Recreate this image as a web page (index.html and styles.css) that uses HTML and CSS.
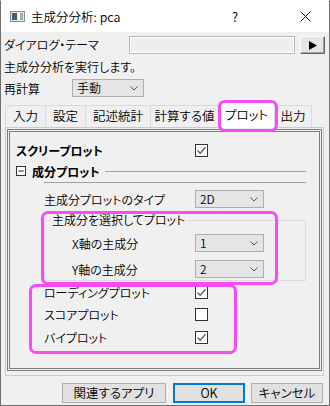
FILE: index.html
```html
<!DOCTYPE html>
<html lang="ja">
<head>
    <meta charset="UTF-8">
    <title>主成分分析: pca</title>
    <link rel="stylesheet" href="styles.css">
</head>
<body>
<div class="window">
    <div class="titlebar">
        <svg class="app-icon" width="15" height="11" viewBox="0 0 15 11">
            <rect x="0.5" y="0.5" width="14" height="10" fill="#e4e4e4" stroke="#8c8c8c"/>
            <rect x="2" y="2" width="5" height="7" fill="#3f5d7c"/>
            <rect x="8" y="2" width="2" height="7" fill="#ffffff"/>
            <rect x="10" y="2" width="3" height="7" fill="#9bb79d"/>
        </svg>
        <span class="title">主成分分析: pca</span>
        <span class="help">?</span>
        <svg class="close" width="11" height="11" viewBox="0 0 11 11">
            <path d="M0.5 0.5 L10.5 10.5 M10.5 0.5 L0.5 10.5" stroke="#111" stroke-width="1"/>
        </svg>
    </div>

    <div class="content">
        <div class="theme-row">
            <span class="theme-label">ダイアログ・テーマ</span>
            <div class="theme-input"></div>
            <div class="arrow-btn">
                <svg width="8" height="9" viewBox="0 0 8 9"><path d="M0 0 L8 4.5 L0 9 Z" fill="#000"/></svg>
            </div>
        </div>

        <div class="desc">主成分分析を実行します。</div>

        <div class="recalc-row">
            <span class="recalc-label">再計算</span>
            <div class="select recalc-select">
                <span>手動</span>
                <svg class="chev" width="8" height="5" viewBox="0 0 8 5"><path d="M0.5 0.5 L4 4 L7.5 0.5" fill="none" stroke="#555"/></svg>
            </div>
        </div>

        <!-- タブ -->
        <div class="tabs">
            <div class="tab w40">入力</div>
            <div class="tab w40">設定</div>
            <div class="tab w65">記述統計</div>
            <div class="tab w68">計算する値</div>
            <div class="tab active">プロット</div>
            <div class="tab w37">出力</div>
        </div>

        <div class="tab-panel">
            <div class="panel-box">
                <div class="row scree-row">
                    <span class="lbl bold scree-lbl">スクリープロット</span>
                    <span class="check"><svg width="11" height="11" viewBox="0 0 11 11"><path d="M1.5 5.5 L4.2 8.2 L9.5 2.2" fill="none" stroke="#5c5c5c" stroke-width="1.3"/></svg></span>
                </div>
                <div class="row section-row">
                    <svg class="minus" width="10" height="10" viewBox="0 0 10 10">
                        <rect x="0.5" y="0.5" width="9" height="9" fill="#fff" stroke="#333"/>
                        <path d="M2.5 5 H7.5" stroke="#111"/>
                    </svg>
                    <span class="lbl bold">成分プロット</span>
                    <span class="section-line"></span>
                </div>
                <div class="sub-line"></div>
                <div class="row type-row">
                    <span class="lbl type-lbl">主成分プロットのタイプ</span>
                    <div class="select">
                        <span>2D</span>
                        <svg class="chev" width="8" height="5" viewBox="0 0 8 5"><path d="M0.5 0.5 L4 4 L7.5 0.5" fill="none" stroke="#555"/></svg>
                    </div>
                </div>

                <fieldset class="group">
                    <legend>主成分を選択してプロット</legend>
                    <div class="row axis-row first">
                        <span class="lbl axis-lbl">X軸の主成分</span>
                        <div class="select">
                            <span>1</span>
                            <svg class="chev" width="8" height="5" viewBox="0 0 8 5"><path d="M0.5 0.5 L4 4 L7.5 0.5" fill="none" stroke="#555"/></svg>
                        </div>
                    </div>
                    <div class="row axis-row second">
                        <span class="lbl axis-lbl">Y軸の主成分</span>
                        <div class="select">
                            <span>2</span>
                            <svg class="chev" width="8" height="5" viewBox="0 0 8 5"><path d="M0.5 0.5 L4 4 L7.5 0.5" fill="none" stroke="#555"/></svg>
                        </div>
                    </div>
                </fieldset>

                <div class="row check-row">
                    <span class="lbl check-lbl">ローディングプロット</span>
                    <span class="check"><svg width="11" height="11" viewBox="0 0 11 11"><path d="M1.5 5.5 L4.2 8.2 L9.5 2.2" fill="none" stroke="#5c5c5c" stroke-width="1.3"/></svg></span>
                </div>
                <div class="row check-row mid">
                    <span class="lbl check-lbl">スコアプロット</span>
                    <span class="check"></span>
                </div>
                <div class="row check-row">
                    <span class="lbl check-lbl">バイプロット</span>
                    <span class="check"><svg width="11" height="11" viewBox="0 0 11 11"><path d="M1.5 5.5 L4.2 8.2 L9.5 2.2" fill="none" stroke="#5c5c5c" stroke-width="1.3"/></svg></span>
                </div>
            </div>
        </div>

        <div class="buttons">
            <div class="btn btn-apps">関連するアプリ</div>
            <div class="btn btn-ok">OK</div>
            <div class="btn btn-cancel">キャンセル</div>
        </div>
    </div>

    <!-- 注釈の枠 -->
    <div class="mark mark-tab"></div>
    <div class="mark mark-group"></div>
    <div class="mark mark-checks"></div>
</div>
</body>
</html>
```

FILE: styles.css
```css
* {
    box-sizing: border-box;
}
body {
    margin: 0;
    font-family: "Noto Sans CJK JP", "Noto Sans", sans-serif;
    font-size: 12px;
    font-weight: 350;
    font-feature-settings: "palt";
    color: #000;
    background: #fff;
}
.window {
    position: relative;
    width: 330px;
    height: 406px;
    border: 1px solid #6f6f6f;
    border-top-color: #ffffff;
    background: #f0f0f0;
}

/* タイトルバー */
.titlebar {
    height: 31px;
    background: #fff;
    display: flex;
    align-items: center;
}
.app-icon {
    margin-left: 9px;
}
.title {
    margin-left: 6px;
    font-size: 12.5px;
}
.help {
    margin-left: auto;
    margin-right: 62px;
    font-size: 13px;
}
.close {
    margin-right: 18px;
}

.content {
    padding: 0 4px 0 3px;
}

/* テーマ行 */
.theme-row {
    margin-top: 4px;
    height: 18px;
    display: flex;
    align-items: center;
}
.theme-label {
    width: 125px;
    line-height: 18px;
}
.theme-input {
    width: 166px;
    height: 18px;
    border: 1px solid #b9b9b9;
    box-shadow: inset 0 0 0 1px #ffffff;
    background: #eeeeee;
}
.arrow-btn {
    margin-left: 5px;
    width: 25px;
    height: 18px;
    background: #e6e6e6;
    border: 1px solid;
    border-color: #ffffff #646464 #646464 #ffffff;
    box-shadow: inset -1px -1px 0 #a0a0a0;
    display: flex;
    align-items: center;
    justify-content: center;
}

.desc {
    margin-top: 4px;
    height: 18px;
    line-height: 18px;
}

.recalc-row {
    margin-top: 3px;
    height: 18px;
    display: flex;
    align-items: center;
}
.recalc-label {
    width: 68px;
}

/* コンボボックス */
.select {
    width: 69px;
    height: 18px;
    border: 1px solid #adadad;
    background: #e5e5e5;
    display: flex;
    align-items: center;
    padding-left: 4px;
    line-height: 16px;
}
.select .chev {
    margin-left: auto;
    margin-right: 5px;
}
.recalc-select {
    width: 72px;
}

/* タブ */
.tabs {
    margin-top: 4px;
    height: 26px;
    padding-left: 1px;
    display: flex;
    align-items: flex-end;
    position: relative;
    z-index: 1;
}
.tab {
    height: 22px;
    border: 1px solid #d9d9d9;
    border-bottom: none;
    background: #f0f0f0;
    text-align: center;
    line-height: 20px;
    margin-right: -1px;
    font-size: 12.5px;
}
.w40 { width: 41px; }
.w65 { width: 66px; }
.w68 { width: 69px; }
.w37 { width: 38px; }
.tab.active {
    width: 57px;
    height: 27px;
    background: #fff;
    margin-bottom: -1px;
    line-height: 26px;
    position: relative;
    z-index: 2;
}

.tab-panel {
    margin: 0 1px;
    height: 249px;
    border: 1px solid #cbcbcb;
    padding: 1px;
}
.panel-box {
    height: 242px;
    border: 3px double #7d7d7d;
    padding: 7px 5px 0 6px;
}

.row {
    display: flex;
    align-items: center;
}
.lbl {
    white-space: nowrap;
}
.bold {
    font-weight: bold;
}
.scree-row {
    height: 22px;
}
.scree-lbl {
    width: 179px;
}
.check {
    width: 13px;
    height: 13px;
    border: 1px solid #333;
    background: #fff;
    display: flex;
    align-items: center;
    justify-content: center;
}
.section-row {
    height: 20px;
}
.minus {
    margin-right: 6px;
}
.section-line {
    flex: 1;
    height: 1px;
    background: #a0a0a0;
    margin: 0 8px 0 5px;
}
.sub-line {
    margin: 1px 8px 0 28px;
    height: 1px;
    background: #a0a0a0;
}
.type-row {
    margin-top: 7px;
    height: 18px;
    padding-left: 28px;
}
.type-lbl {
    width: 151px;
}

/* グループ */
.group {
    margin: 3px 8px 0 28px;
    padding: 0 0 2px 0;
    border: 1px solid #dcdcdc;
    min-width: 0;
}
.group legend {
    margin-left: 5px;
    padding: 0 2px;
    line-height: 18px;
}
.axis-row {
    height: 18px;
    padding-left: 27px;
}
.axis-row.first {
    margin-top: 5px;
}
.axis-row.second {
    margin-top: 8px;
}
.axis-lbl {
    width: 123px;
}

.check-row {
    height: 22px;
    padding-left: 28px;
}
.check-row.mid {
    height: 23px;
}
.check-lbl {
    width: 151px;
}

/* ボタン */
.buttons {
    margin-top: 7px;
    padding-right: 2px;
    display: flex;
    justify-content: flex-end;
    gap: 6px;
}
.btn {
    height: 20px;
    border: 1px solid #adadad;
    background: #e1e1e1;
    text-align: center;
    line-height: 18px;
    font-size: 12.5px;
}
.btn-apps {
    width: 104px;
    margin-right: 1px;
}
.btn-ok {
    width: 72px;
    border: 2px solid #0078d7;
    line-height: 16px;
}
.btn-cancel {
    width: 72px;
}

/* 注釈 */
.mark {
    position: absolute;
    border: 3px solid #f54cf5;
    border-radius: 7px;
    z-index: 5;
}
.mark-tab {
    left: 217px;
    top: 99px;
    width: 60px;
    height: 32px;
}
.mark-group {
    left: 40px;
    top: 210px;
    width: 237px;
    height: 74px;
}
.mark-checks {
    left: 28px;
    top: 283px;
    width: 208px;
    height: 70px;
}
```
